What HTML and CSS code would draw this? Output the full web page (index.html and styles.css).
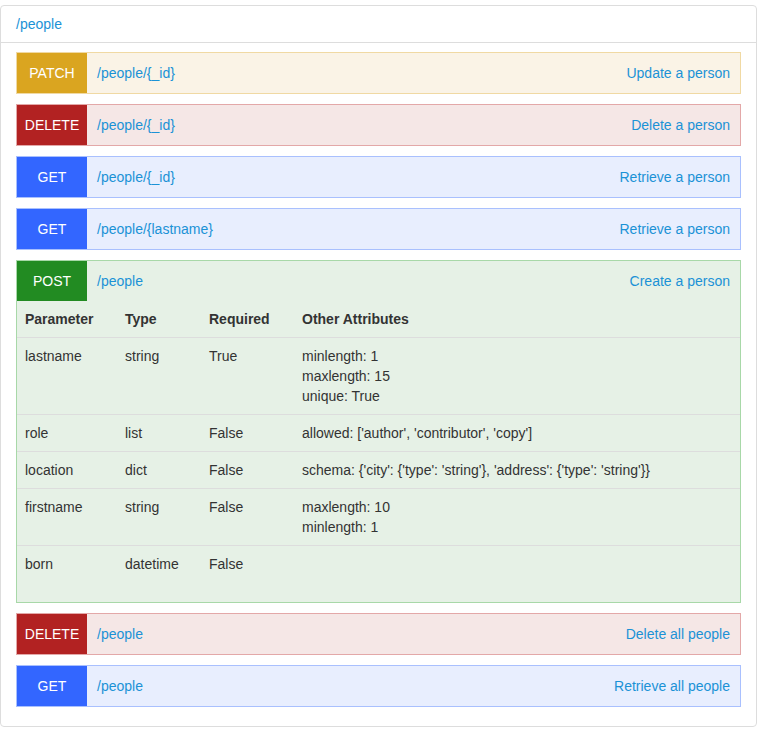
FILE: index.html
```html
<!DOCTYPE html>
<html>
<head>
<meta charset="utf-8">
<link rel="stylesheet" href="styles.css">
</head>
<body>
<div class="panel">
  <div class="panel-heading"><a href="#">/people</a></div>
  <div class="panel-body">
    <div class="ep patch">
      <div class="ep-head"><span class="method">PATCH</span><a class="path" href="#">/people/{_id}</a><a class="desc" href="#">Update a person</a></div>
    </div>
    <div class="ep delete">
      <div class="ep-head"><span class="method">DELETE</span><a class="path" href="#">/people/{_id}</a><a class="desc" href="#">Delete a person</a></div>
    </div>
    <div class="ep get">
      <div class="ep-head"><span class="method">GET</span><a class="path" href="#">/people/{_id}</a><a class="desc" href="#">Retrieve a person</a></div>
    </div>
    <div class="ep get">
      <div class="ep-head"><span class="method">GET</span><a class="path" href="#">/people/{lastname}</a><a class="desc" href="#">Retrieve a person</a></div>
    </div>
    <div class="ep post">
      <div class="ep-head"><span class="method">POST</span><a class="path" href="#">/people</a><a class="desc" href="#">Create a person</a></div>
      <table class="params">
        <colgroup><col class="c1"><col class="c2"><col class="c3"><col></colgroup>
        <thead>
          <tr><th>Parameter</th><th>Type</th><th>Required</th><th>Other Attributes</th></tr>
        </thead>
        <tbody>
          <tr><td>lastname</td><td>string</td><td>True</td><td>minlength: 1<br>maxlength: 15<br>unique: True</td></tr>
          <tr><td>role</td><td>list</td><td>False</td><td>allowed: ['author', 'contributor', 'copy']</td></tr>
          <tr><td>location</td><td>dict</td><td>False</td><td>schema: {'city': {'type': 'string'}, 'address': {'type': 'string'}}</td></tr>
          <tr><td>firstname</td><td>string</td><td>False</td><td>maxlength: 10<br>minlength: 1</td></tr>
          <tr><td>born</td><td>datetime</td><td>False</td><td></td></tr>
        </tbody>
      </table>
    </div>
    <div class="ep delete">
      <div class="ep-head"><span class="method">DELETE</span><a class="path" href="#">/people</a><a class="desc" href="#">Delete all people</a></div>
    </div>
    <div class="ep get">
      <div class="ep-head"><span class="method">GET</span><a class="path" href="#">/people</a><a class="desc" href="#">Retrieve all people</a></div>
    </div>
  </div>
</div>
</body>
</html>
```
FILE: styles.css
```css
* { box-sizing: border-box; }
html, body { margin: 0; padding: 0; background: #fff; }
body {
  font-family: "Liberation Sans", Arial, Helvetica, sans-serif;
  font-size: 14px;
  line-height: 20px;
  color: #333;
  padding-top: 5px;
}
a { color: #1b92d6; text-decoration: none; }
.panel {
  width: 757px;
  border: 1px solid #ddd;
  border-radius: 4px;
  background: #fff;
}
.panel-heading {
  padding: 8px 15px;
  border-bottom: 1px solid #ddd;
}
.panel-body {
  padding: 9px 15px 9px;
}
.ep {
  border: 1px solid;
  margin-bottom: 10px;
}
.ep-head {
  display: flex;
  align-items: center;
  height: 40px;
}
.method {
  width: 70px;
  height: 40px;
  display: flex;
  align-items: center;
  justify-content: center;
  color: #fff;
  flex: none;
}
.path { margin-left: 10px; }
.desc { margin-left: auto; margin-right: 10px; }

.patch { background: #faf3e6; border-color: #f0d9a3; }
.patch .method { background: #daa520; }
.delete { background: #f5e7e6; border-color: #e3a8a8; }
.delete .method { background: #b22222; }
.get { background: #e8eefe; border-color: #a9c0fe; }
.get .method { background: #3366ff; }
.post { background: #e6f1e6; border-color: #a8d8a8; }
.post .method { background: #228b22; }

.params {
  width: 100%;
  border-collapse: collapse;
  margin-bottom: 20px;
}
.params col.c1 { width: 100px; }
.params col.c2 { width: 84px; }
.params col.c3 { width: 93px; }
.params th, .params td {
  padding: 8px;
  text-align: left;
  vertical-align: top;
}
.params th { font-weight: bold; border-bottom: 1px solid #ddd; }
.params td { border-bottom: 1px solid #ddd; }
.params tr:last-child td { border-bottom: none; }
```
